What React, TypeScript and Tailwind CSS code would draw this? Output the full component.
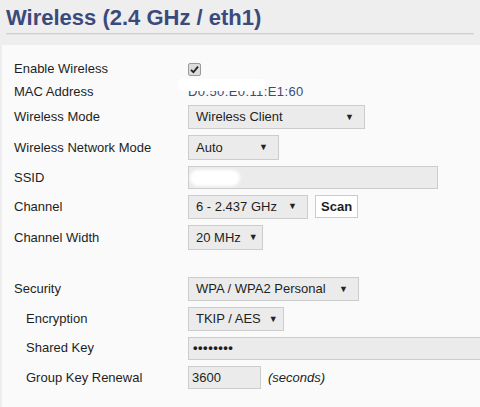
import React from 'react';

const font = { fontFamily: '"Liberation Sans", Arial, sans-serif' };

function Arrow() {
  return <span className="ml-auto pl-2 text-[9px] leading-none text-[#222]">▼</span>;
}

function Select({ value, w, h = 'h-[24px]' }: { value: string; w: string; h?: string }) {
  return (
    <div className={`flex shrink-0 ${w} ${h} items-center whitespace-nowrap border border-[#cccccc] bg-[#ebebeb] pl-[7px] pr-[10px] text-[13px] text-[#1e1e1e]`}>
      <span>{value}</span>
      <Arrow />
    </div>
  );
}

function Row({ label, h, indent, children }: { label: string; h: string; indent?: boolean; children?: React.ReactNode }) {
  return (
    <div className={`flex ${h} items-center`}>
      <div className={`w-[174px] shrink-0 whitespace-nowrap text-[13px] text-[#1e1e1e] ${indent ? 'pl-[12px]' : ''}`}>{label}</div>
      <div className="flex flex-1 items-center whitespace-nowrap">{children}</div>
    </div>
  );
}

export default function App() {
  return (
    <div className="h-[407px] w-[480px] overflow-hidden bg-[#eeeeee]" style={font}>
      <div className="px-[6px] pt-[5px]">
        <h1 className="text-[22px] font-bold leading-[26px] text-[#3b4a7c]">Wireless (2.4 GHz / eth1)</h1>
        <div className="mt-[2px] h-[2px] border-t border-[#cfcfcf] bg-[#e4e4e4]" />
      </div>
      <div className="ml-[2px] mt-[10px] h-full bg-[#fafafa] pl-[12px] pt-[12px]">
        <Row label="Enable Wireless" h="h-[24px]">
          <div className="flex h-[13px] w-[13px] items-center justify-center rounded-[2px] border border-[#9a9a9a] bg-[#dcdcdc]">
            <svg width="9" height="9" viewBox="0 0 9 9">
              <path d="M1 4.8 L3.4 7.2 L8 1.6" stroke="#222" strokeWidth="1.8" fill="none" />
            </svg>
          </div>
        </Row>
        <Row label="MAC Address" h="h-[22px]">
          <div className="relative text-[13px] tracking-[0.4px] text-[#3b4a7c]">
            <span>D0:50:E0:11:E1:60</span>
            {/* redaction smear over the first part */}
            <div className="absolute -left-[10px] -top-[3px] h-[12px] w-[88px] rounded-[5px] bg-white blur-[0.5px]" />
          </div>
        </Row>
        <Row label="Wireless Mode" h="h-[28px]">
          <Select value="Wireless Client" w="w-[177px]" />
        </Row>
        <Row label="Wireless Network Mode" h="h-[33px]">
          <Select value="Auto" w="w-[91px]" h="h-[25px]" />
        </Row>
        <Row label="SSID" h="h-[27px]">
          <div className="relative h-[23px] w-[250px] border border-[#cccccc] bg-[#ebebeb]">
            <div className="absolute left-[1px] top-[3px] h-[16px] w-[50px] rounded-[8px] bg-white blur-[1.5px]" />
          </div>
        </Row>
        <Row label="Channel" h="h-[31px]">
          <Select value="6 - 2.437 GHz" w="w-[120px]" />
          <div className="ml-[7px] flex h-[23px] items-center border border-[#cccccc] bg-white px-[5px] text-[13px] font-bold text-[#1e1e1e]">Scan</div>
        </Row>
        <Row label="Channel Width" h="h-[31px]">
          <Select value="20 MHz" w="w-[75px]" h="h-[25px]" />
        </Row>
        <div className="h-[21px]" />
        <Row label="Security" h="h-[30px]">
          <Select value="WPA / WPA2 Personal" w="w-[171px]" />
        </Row>
        <Row label="Encryption" h="h-[30px]" indent>
          <Select value="TKIP / AES" w="w-[96px]" />
        </Row>
        <Row label="Shared Key" h="h-[28px]" indent>
          <div className="flex h-[23px] w-[300px] shrink-0 items-center border border-[#cccccc] bg-[#ebebeb] pl-[4px] text-[13px] font-bold tracking-[0.5px] text-[#1e1e1e]">
            ••••••••
          </div>
        </Row>
        <Row label="Group Key Renewal" h="h-[31px]" indent>
          <div className="flex h-[23px] w-[73px] shrink-0 items-center border border-[#cccccc] bg-[#ebebeb] pl-[3px] text-[13px] text-[#1e1e1e]">3600</div>
          <span className="ml-[7px] text-[13px] italic text-[#1e1e1e]">(seconds)</span>
        </Row>
      </div>
    </div>
  );
}
